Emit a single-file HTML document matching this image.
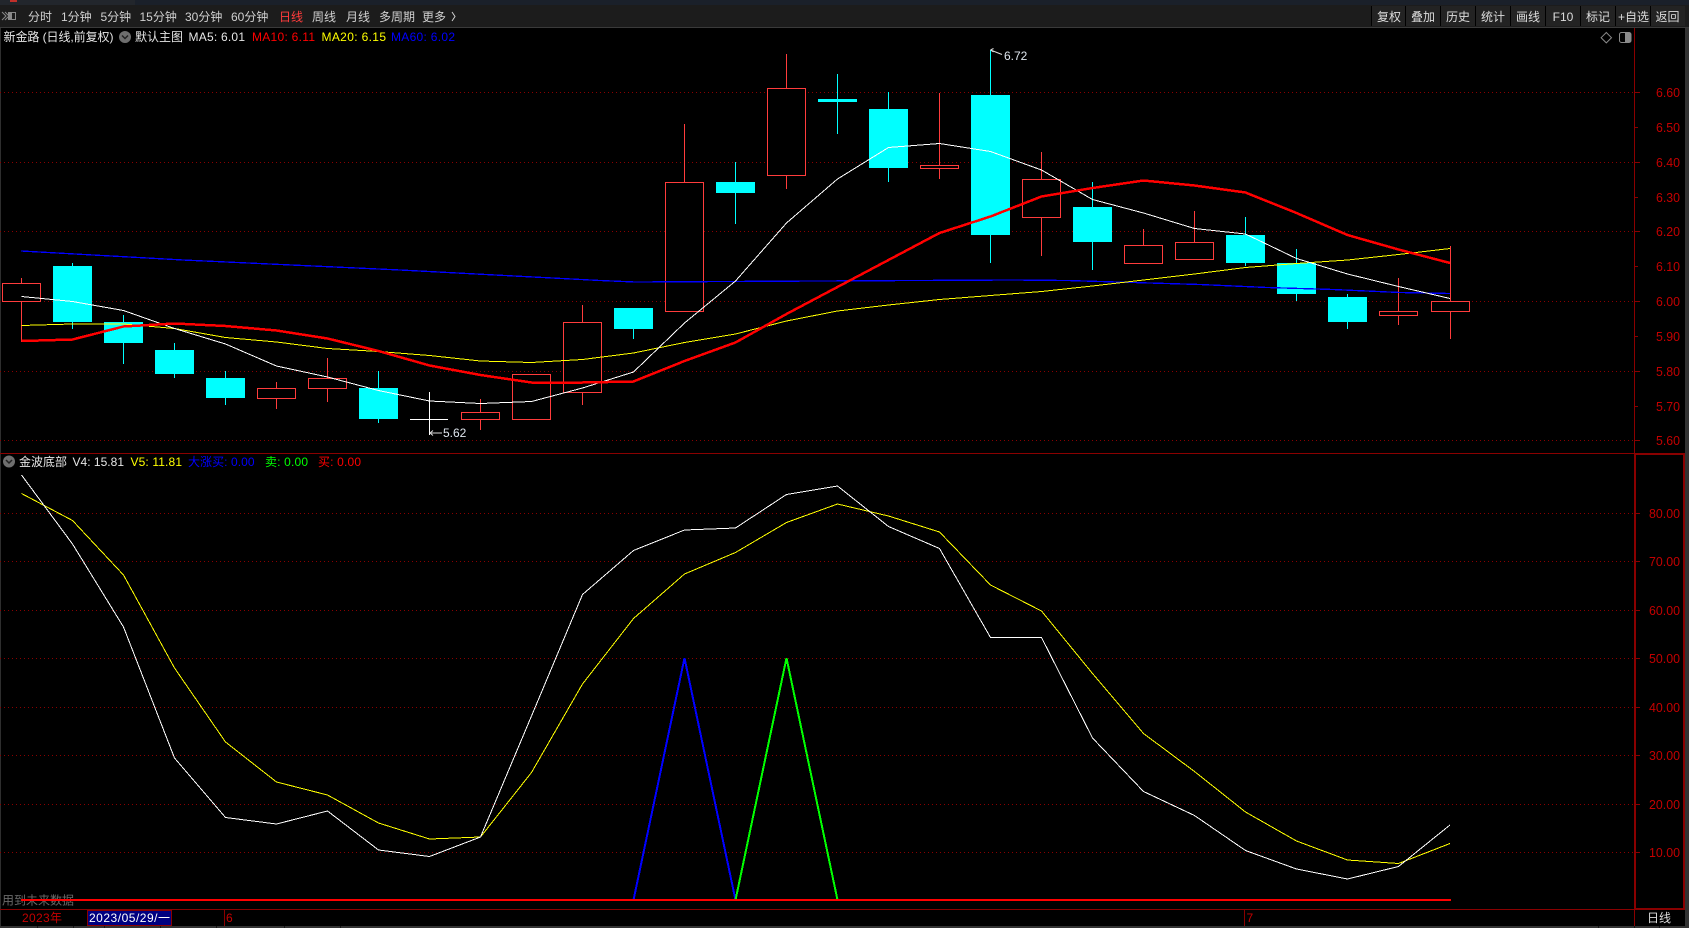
<!DOCTYPE html>
<html lang="zh"><head><meta charset="utf-8"><title>新金路</title>
<style>
html,body{margin:0;padding:0;background:#000;width:1689px;height:928px;overflow:hidden}
svg{display:block;position:absolute;left:0;top:0}
text{font-family:"Liberation Sans","Noto Sans CJK SC",sans-serif;font-size:12px}
.tb text{fill:#d0d0d0}
.ax text{fill:#c40000;text-anchor:end;font-size:13px}
.btn text{fill:#dcdcdc;text-anchor:middle}
.g line{stroke:#8a0000;stroke-dasharray:1 3}
.t line{stroke:#8a0000}
.c rect{fill:#0ff}.c line{stroke:#0ff}
.r rect{fill:#000;stroke:#ff3c3c}.r line{stroke:#ff3c3c}
</style></head><body>
<svg width="1689" height="928" viewBox="0 0 1689 928" xmlns="http://www.w3.org/2000/svg">
<rect width="1689" height="928" fill="#000"/>
<!-- top strip / toolbar -->
<rect width="1689" height="5" fill="#1a202a"/>
<rect x="0" width="135" height="5" fill="#22262c"/>
<rect x="10" width="7" height="2" fill="#c0302a"/>
<rect y="5" width="1689" height="22" fill="#1c1c1c"/>
<rect y="27" width="1689" height="1" fill="#3a3a3a"/>
<g fill="none" stroke="#8a8a8a"><path d="M2 12l4 4-4 4M5 12l4 4-4 4"/><rect x="8.500" y="12.500" width="7" height="7"/></g>
<rect x="9" y="13" width="3" height="6" fill="#8a8a8a"/>
<g class="tb">
<text x="28" y="21">分时</text><text x="61" y="21">1分钟</text><text x="100.500" y="21">5分钟</text><text x="139.500" y="21">15分钟</text><text x="185" y="21">30分钟</text><text x="231" y="21">60分钟</text>
<text x="279" y="21" style="fill:#ff3c3c">日线</text><text x="312" y="21">周线</text><text x="346" y="21">月线</text><text x="379" y="21">多周期</text><text x="422" y="21">更多</text>
<path d="M452 12l3 4.500-3 4.500" fill="none" stroke="#d0d0d0"/>
</g>
<!-- right buttons -->
<rect x="1371" y="6" width="314" height="20" fill="#232323"/>
<g fill="#000"><rect x="1371" y="6" width="1" height="20"/><rect x="1405" y="6" width="1" height="20"/><rect x="1440" y="6" width="1" height="20"/><rect x="1475" y="6" width="1" height="20"/><rect x="1510" y="6" width="1" height="20"/><rect x="1545" y="6" width="1" height="20"/><rect x="1580" y="6" width="1" height="20"/><rect x="1615" y="6" width="1" height="20"/><rect x="1650" y="6" width="1" height="20"/></g>
<g class="btn">
<text x="1389" y="21">复权</text><text x="1423" y="21">叠加</text><text x="1458" y="21">历史</text><text x="1493" y="21">统计</text><text x="1528" y="21">画线</text><text x="1563" y="21">F10</text><text x="1598" y="21">标记</text><text x="1633.500" y="21">+自选</text><text x="1667.500" y="21">返回</text>
</g>
<!-- frame -->
<rect x="0" y="28" width="1" height="898" fill="#2e2e2e"/>
<rect x="1685" y="28" width="4" height="898" fill="#333"/>
<rect x="0" y="926" width="1689" height="2" fill="#333"/>
<!-- info row -->
<text x="3.500" y="41" fill="#e6e6e6" textLength="110">新金路 (日线,前复权)</text>
<circle cx="125" cy="37" r="6" fill="#6e6e6e"/><path d="M122 35.500l3 3 3-3" fill="none" stroke="#222" stroke-width="1.500"/>
<text x="135" y="41" fill="#e6e6e6" textLength="48">默认主图</text>
<text x="188.500" y="41" fill="#e6e6e6" textLength="56.500">MA5: 6.01</text>
<text x="252" y="41" fill="#f00" textLength="63">MA10: 6.11</text>
<text x="321.500" y="41" fill="#ff0" textLength="64.500">MA20: 6.15</text>
<text x="391" y="41" fill="#0000ff" textLength="64">MA60: 6.02</text>
<path d="M1606.300 32.500l5.200 5.200-5.200 5.200-5.200-5.200z" fill="none" stroke="#8a8a8a"/>
<rect x="1619.500" y="32.500" width="11.500" height="10" rx="2" fill="none" stroke="#8a8a8a"/><rect x="1625" y="33" width="5.500" height="9" fill="#8a8a8a"/>
<!-- grids -->
<g class="g">
<line x1="0" x2="1634" y1="92.500" y2="92.500"/><line x1="0" x2="1634" y1="162.500" y2="162.500"/><line x1="0" x2="1634" y1="231.500" y2="231.500"/><line x1="0" x2="1634" y1="301.500" y2="301.500"/><line x1="0" x2="1634" y1="371.500" y2="371.500"/><line x1="0" x2="1634" y1="440.500" y2="440.500"/>
<line x1="0" x2="1634" y1="513.500" y2="513.500"/><line x1="0" x2="1634" y1="561.500" y2="561.500"/><line x1="0" x2="1634" y1="610.500" y2="610.500"/><line x1="0" x2="1634" y1="658.500" y2="658.500"/><line x1="0" x2="1634" y1="707.500" y2="707.500"/><line x1="0" x2="1634" y1="755.500" y2="755.500"/><line x1="0" x2="1634" y1="804.500" y2="804.500"/><line x1="0" x2="1634" y1="852.500" y2="852.500"/>
</g>
<!-- axes -->
<g class="t">
<line x1="1634.500" x2="1634.500" y1="28" y2="453"/>
<line x1="0" x2="1685" y1="453.500" y2="453.500"/>
<line x1="0" x2="1685" y1="909.500" y2="909.500"/>
<line x1="1635" x2="1640" y1="92.500" y2="92.500"/><line x1="1635" x2="1638" y1="127.500" y2="127.500"/><line x1="1635" x2="1640" y1="162.500" y2="162.500"/><line x1="1635" x2="1638" y1="197.500" y2="197.500"/><line x1="1635" x2="1640" y1="231.500" y2="231.500"/><line x1="1635" x2="1638" y1="266.500" y2="266.500"/><line x1="1635" x2="1640" y1="301.500" y2="301.500"/><line x1="1635" x2="1638" y1="336.500" y2="336.500"/><line x1="1635" x2="1640" y1="371.500" y2="371.500"/><line x1="1635" x2="1638" y1="406.500" y2="406.500"/><line x1="1635" x2="1640" y1="440.500" y2="440.500"/>
<line x1="1635" x2="1640" y1="513.500" y2="513.500"/><line x1="1635" x2="1640" y1="561.500" y2="561.500"/><line x1="1635" x2="1640" y1="610.500" y2="610.500"/><line x1="1635" x2="1640" y1="658.500" y2="658.500"/><line x1="1635" x2="1640" y1="707.500" y2="707.500"/><line x1="1635" x2="1640" y1="755.500" y2="755.500"/><line x1="1635" x2="1640" y1="804.500" y2="804.500"/><line x1="1635" x2="1640" y1="852.500" y2="852.500"/>
<line x1="1634.500" x2="1634.500" y1="909" y2="926"/>
<line x1="224.500" x2="224.500" y1="910" y2="926"/>
<line x1="1244.500" x2="1244.500" y1="910" y2="926"/>
</g>
<rect x="1634" y="453" width="2" height="457" fill="#8a0000"/>
<rect x="1634" y="453" width="51" height="2" fill="#8a0000"/>
<rect x="1683" y="453" width="2" height="457" fill="#8a0000"/>
<rect x="1634" y="908" width="51" height="2" fill="#8a0000"/>
<g class="ax">
<text x="1680" y="97" textLength="24" lengthAdjust="spacingAndGlyphs">6.60</text><text x="1680" y="132" textLength="24" lengthAdjust="spacingAndGlyphs">6.50</text><text x="1680" y="167" textLength="24" lengthAdjust="spacingAndGlyphs">6.40</text><text x="1680" y="202" textLength="24" lengthAdjust="spacingAndGlyphs">6.30</text><text x="1680" y="236" textLength="24" lengthAdjust="spacingAndGlyphs">6.20</text><text x="1680" y="271" textLength="24" lengthAdjust="spacingAndGlyphs">6.10</text><text x="1680" y="306" textLength="24" lengthAdjust="spacingAndGlyphs">6.00</text><text x="1680" y="341" textLength="24" lengthAdjust="spacingAndGlyphs">5.90</text><text x="1680" y="376" textLength="24" lengthAdjust="spacingAndGlyphs">5.80</text><text x="1680" y="411" textLength="24" lengthAdjust="spacingAndGlyphs">5.70</text><text x="1680" y="445" textLength="24" lengthAdjust="spacingAndGlyphs">5.60</text>
<text x="1680" y="518" textLength="31" lengthAdjust="spacingAndGlyphs">80.00</text><text x="1680" y="566" textLength="31" lengthAdjust="spacingAndGlyphs">70.00</text><text x="1680" y="615" textLength="31" lengthAdjust="spacingAndGlyphs">60.00</text><text x="1680" y="663" textLength="31" lengthAdjust="spacingAndGlyphs">50.00</text><text x="1680" y="712" textLength="31" lengthAdjust="spacingAndGlyphs">40.00</text><text x="1680" y="760" textLength="31" lengthAdjust="spacingAndGlyphs">30.00</text><text x="1680" y="809" textLength="31" lengthAdjust="spacingAndGlyphs">20.00</text><text x="1680" y="857" textLength="31" lengthAdjust="spacingAndGlyphs">10.00</text>
</g>
<!-- candles -->
<g shape-rendering="crispEdges">
<g class="r"><line x1="21.500" x2="21.500" y1="278" y2="342"/><rect x="2.500" y="283.500" width="38" height="18"/></g>
<g class="c"><line x1="72.500" x2="72.500" y1="263" y2="329"/><rect x="53" y="266" width="39" height="56"/></g>
<g class="c"><line x1="123.500" x2="123.500" y1="315" y2="364"/><rect x="104" y="322" width="39" height="21"/></g>
<g class="c"><line x1="174.500" x2="174.500" y1="343" y2="378"/><rect x="155" y="350" width="39" height="24"/></g>
<g class="c"><line x1="225.500" x2="225.500" y1="371" y2="405"/><rect x="206" y="378" width="39" height="20"/></g>
<g class="r"><line x1="276.500" x2="276.500" y1="382" y2="409"/><rect x="257.500" y="388.500" width="38" height="10"/></g>
<g class="r"><line x1="327.500" x2="327.500" y1="358" y2="402"/><rect x="308.500" y="378.500" width="38" height="10"/></g>
<g class="c"><line x1="378.500" x2="378.500" y1="371" y2="423"/><rect x="359" y="388" width="39" height="31"/></g>
<g stroke="#fff"><line x1="429.500" x2="429.500" y1="392" y2="435"/><line x1="410" x2="448" y1="419.500" y2="419.500"/></g>
<g class="r"><line x1="480.500" x2="480.500" y1="399" y2="430"/><rect x="461.500" y="412.500" width="38" height="7"/></g>
<g class="r"><rect x="512.500" y="374.500" width="38" height="45"/></g>
<g class="r"><line x1="582.500" x2="582.500" y1="305" y2="405"/><rect x="563.500" y="322.500" width="38" height="70"/></g>
<g class="c"><line x1="633.500" x2="633.500" y1="329" y2="339"/><rect x="614" y="308" width="39" height="21"/></g>
<g class="r"><line x1="684.500" x2="684.500" y1="124" y2="311"/><rect x="665.500" y="182.500" width="38" height="129"/></g>
<g class="c"><line x1="735.500" x2="735.500" y1="162" y2="224"/><rect x="716" y="182" width="39" height="11"/></g>
<g class="r"><line x1="786.500" x2="786.500" y1="54" y2="189"/><rect x="767.500" y="88.500" width="38" height="87"/></g>
<g class="c"><line x1="837.500" x2="837.500" y1="74" y2="134"/><rect x="818" y="99" width="39" height="3"/></g>
<g class="c"><line x1="888.500" x2="888.500" y1="92" y2="182"/><rect x="869" y="109" width="39" height="59"/></g>
<g class="r"><line x1="939.500" x2="939.500" y1="93" y2="179"/><rect x="920.500" y="165.500" width="38" height="3"/></g>
<g class="c"><line x1="990.500" x2="990.500" y1="50" y2="263"/><rect x="971" y="95" width="39" height="140"/></g>
<g class="r"><line x1="1041.500" x2="1041.500" y1="152" y2="256"/><rect x="1022.500" y="179.500" width="38" height="38"/></g>
<g class="c"><line x1="1092.500" x2="1092.500" y1="182" y2="270"/><rect x="1073" y="207" width="39" height="35"/></g>
<g class="r"><line x1="1143.500" x2="1143.500" y1="229" y2="245"/><rect x="1124.500" y="245.500" width="38" height="18"/></g>
<g class="r"><line x1="1194.500" x2="1194.500" y1="211" y2="242"/><rect x="1175.500" y="242.500" width="38" height="17"/></g>
<g class="c"><line x1="1245.500" x2="1245.500" y1="217" y2="266"/><rect x="1226" y="235" width="39" height="28"/></g>
<g class="c"><line x1="1296.500" x2="1296.500" y1="249" y2="301"/><rect x="1277" y="263" width="39" height="31"/></g>
<g class="c"><line x1="1347.500" x2="1347.500" y1="294" y2="329"/><rect x="1328" y="297" width="39" height="25"/></g>
<g class="r"><line x1="1398.500" x2="1398.500" y1="278" y2="325"/><rect x="1379.500" y="311.500" width="38" height="4"/></g>
<g class="r"><line x1="1450.500" x2="1450.500" y1="246" y2="339"/><rect x="1431.500" y="301.500" width="38" height="10"/></g>
</g>
<!-- MA lines -->
<g fill="none" shape-rendering="crispEdges">
<polyline stroke="#0000ff" stroke-width="1.300" points="21,251 183,260 400,270 600,280.500 635,282 818,281 1012,280 1067,280.500 1133,282.500 1200,284.500 1267,287.500 1333,289.500 1400,292.500 1450,293.500"/>
<polyline stroke="#ffff00" points="21.500,325.500 72.500,324 123.500,324 174.500,328.500 225.500,337.500 276.500,342 327.500,348.500 378.500,351.500 429.500,355.500 480.500,361 531.500,362.500 582.500,359.500 633.500,353 684.500,342.500 735.500,334 786.500,321 837.500,311 888.500,305 939.500,299.500 990.500,295.500 1041.500,291.500 1092.500,286 1143.500,280 1194.500,274 1245.500,267.500 1296.500,263.500 1347.500,260 1398.500,254.500 1450,248.500"/>
<polyline stroke="#fff" points="21.500,296.500 72.500,301.500 123.500,310.500 174.500,328.500 225.500,344 276.500,366 327.500,377 378.500,390.500 429.500,401 480.500,403.500 531.500,401.500 582.500,388 633.500,372 684.500,323 735.500,281 786.500,223 837.500,179 888.500,147.500 939.500,143.500 990.500,151.500 1041.500,170 1092.500,199.500 1143.500,213 1194.500,228.500 1245.500,234 1296.500,258.500 1347.500,274 1398.500,286.500 1450,298.500"/>
<polyline stroke="#f00" stroke-width="2.500" points="21.500,341 72.500,339.500 123.500,326.500 174.500,323.500 225.500,326 276.500,330.500 327.500,338.500 378.500,351 429.500,365.500 480.500,375 531.500,382.500 582.500,382.500 633.500,381.500 684.500,361 735.500,342.500 786.500,314 837.500,287 888.500,260 939.500,233 990.500,216.500 1041.500,196.500 1092.500,188 1143.500,180.500 1194.500,185.500 1245.500,192.500 1296.500,213 1347.500,235 1398.500,249.500 1450,263"/>
</g>
<!-- price marks -->
<path d="M990.500 50l11.500 4.500M990.500 50l3-1.500M990.500 50l3 2" fill="none" stroke="#ddd"/>
<text x="1004" y="60" fill="#dfe6ee">6.72</text>
<path d="M430 433h12M430 433l3-2.500M430 433l3 2.500" fill="none" stroke="#ddd"/>
<text x="443" y="437" fill="#dfe6ee">5.62</text>
<!-- lower info -->
<circle cx="9" cy="461.500" r="6" fill="#6e6e6e"/><path d="M6 460l3 3 3-3" fill="none" stroke="#222" stroke-width="1.500"/>
<text x="19" y="466" fill="#e6e6e6" textLength="48">金波底部</text>
<text x="72.500" y="466" fill="#e6e6e6" textLength="51.500">V4: 15.81</text>
<text x="130.500" y="466" fill="#ff0" textLength="51.500">V5: 11.81</text>
<text x="188" y="466" fill="#0000ff" textLength="66.500">大涨买: 0.00</text>
<text x="265" y="466" fill="#0f0" textLength="43">卖: 0.00</text>
<text x="318" y="466" fill="#f00" textLength="43">买: 0.00</text>
<!-- lower lines -->
<text x="2" y="904.500" fill="#6a6a6a" textLength="72">用到未来数据</text>
<g fill="none" shape-rendering="crispEdges">
<polyline stroke="#ffff00" points="21.500,493.500 72.500,520.500 123.500,575 174.500,668 225.500,742 276.500,782 327.500,795 378.500,823 429.500,839 480.500,837 531.500,772.500 582.500,684 633.500,618.500 684.500,574 735.500,552.500 786.500,522.500 837.500,504 888.500,516 939.500,532 990.500,585 1041.500,611 1092.500,673.500 1143.500,733.500 1194.500,771.500 1245.500,812 1296.500,841 1347.500,860 1398.500,863.500 1450,843.500"/>
<polyline stroke="#fff" points="21.500,475 72.500,544 123.500,627 174.500,758 225.500,817.500 276.500,824 327.500,811 378.500,850 429.500,856.500 480.500,837 531.500,716 582.500,594.500 633.500,550.500 684.500,530 735.500,528 786.500,494.500 837.500,486 888.500,526.500 939.500,548.500 990.500,637.500 1041.500,637.500 1092.500,738 1143.500,791.500 1194.500,815.500 1245.500,850.500 1296.500,869 1347.500,879 1398.500,866.500 1450,825"/>
<polyline stroke="#0000ff" stroke-width="2" points="633.500,900 684.500,658 735.500,900"/>
<polyline stroke="#00ff00" stroke-width="2" points="735.500,900 786.500,658 837.500,900"/>
</g>
<rect x="21" y="899" width="1430" height="2" fill="#f00"/>
<!-- date strip -->
<text x="22" y="922" fill="#c40000" textLength="40">2023年</text>
<rect x="87.500" y="910.500" width="84" height="15" fill="#000080" stroke="#8a0000"/>
<text x="89" y="922" fill="#fff" textLength="81">2023/05/29/一</text>
<text x="226" y="922" fill="#c40000">6</text>
<text x="1246.500" y="922" fill="#c40000">7</text>
<text x="1647" y="922" fill="#dcdcdc">日线</text>
<g fill="#151515"><rect x="37" y="926" width="1" height="2"/><rect x="73" y="926" width="1" height="2"/><rect x="104" y="926" width="1" height="2"/><rect x="160" y="926" width="1" height="2"/><rect x="216" y="926" width="1" height="2"/><rect x="284" y="926" width="1" height="2"/><rect x="340" y="926" width="1" height="2"/><rect x="1598" y="926" width="1" height="2"/><rect x="1634" y="926" width="1" height="2"/><rect x="1659" y="926" width="1" height="2"/></g>
</svg>
</body></html>
